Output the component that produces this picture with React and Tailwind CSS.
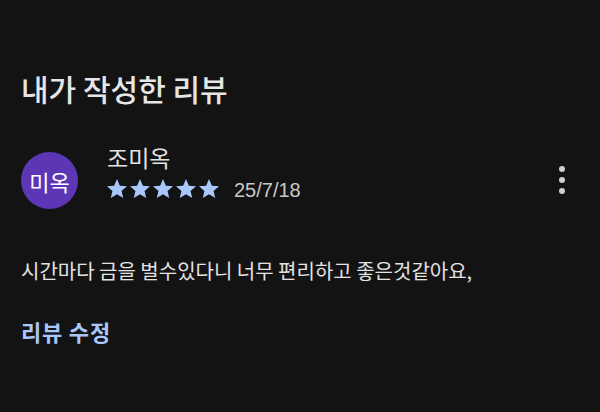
import React from "react";

function Star() {
  return (
    <svg width="20" height="19" viewBox="1.9 2.2 20.2 19" className="shrink-0">
      <path
        d="M12 2.2l2.9 6.6 7.2.6-5.5 4.7 1.7 7.1L12 17.4l-6.3 3.8 1.7-7.1L1.9 9.4l7.2-.6z"
        fill="#a8c7fa"
      />
    </svg>
  );
}

export default function App() {
  return (
    <div
      className="w-[600px] h-[412px] bg-[#131313] overflow-hidden"
      style={{ fontFamily: '"Noto Sans CJK KR", "Noto Sans", sans-serif' }}
    >
      <div className="pl-[21px] pr-[35px] pt-[68px]">
        <h1 className="text-[30px] leading-[40px] font-medium text-[#e6e6e6]">내가 작성한 리뷰</h1>
        <div className="mt-[34px] flex items-start">
          <div className="mt-[10px] w-[57px] h-[57px] rounded-full bg-[#5d36b6] flex items-center justify-center text-[22px] leading-none text-white">
            미옥
          </div>
          <div className="ml-[29px] flex flex-col">
            <div className="text-[23px] leading-[30px] text-[#e3e3e3]">조미옥</div>
            <div className="flex items-end mt-[6px]">
              <div className="flex gap-[3px]">
                <Star />
                <Star />
                <Star />
                <Star />
                <Star />
              </div>
              <span
                className="ml-[15px] text-[20px] leading-[20px] text-[#c8c8c8] translate-y-[2px]"
                style={{ fontFamily: '"Liberation Sans", Roboto, sans-serif' }}
              >
                25/7/18
              </span>
            </div>
          </div>
          <div className="ml-auto mt-[24px] flex flex-col gap-[5px] items-center">
            <span className="w-[6px] h-[6px] rounded-full bg-[#d0d0d0]" />
            <span className="w-[6px] h-[6px] rounded-full bg-[#d0d0d0]" />
            <span className="w-[6px] h-[6px] rounded-full bg-[#d0d0d0]" />
          </div>
        </div>
        <p className="mt-[47px] text-[20px] leading-[30px] text-[#e3e3e3]">
          시간마다 금을 벌수있다니 너무 편리하고 좋은것같아요,
        </p>
        <div className="mt-[30px] text-[22px] leading-[30px] font-semibold tracking-[0.8px] text-[#a8c7fa]">리뷰 수정</div>
      </div>
    </div>
  );
}
